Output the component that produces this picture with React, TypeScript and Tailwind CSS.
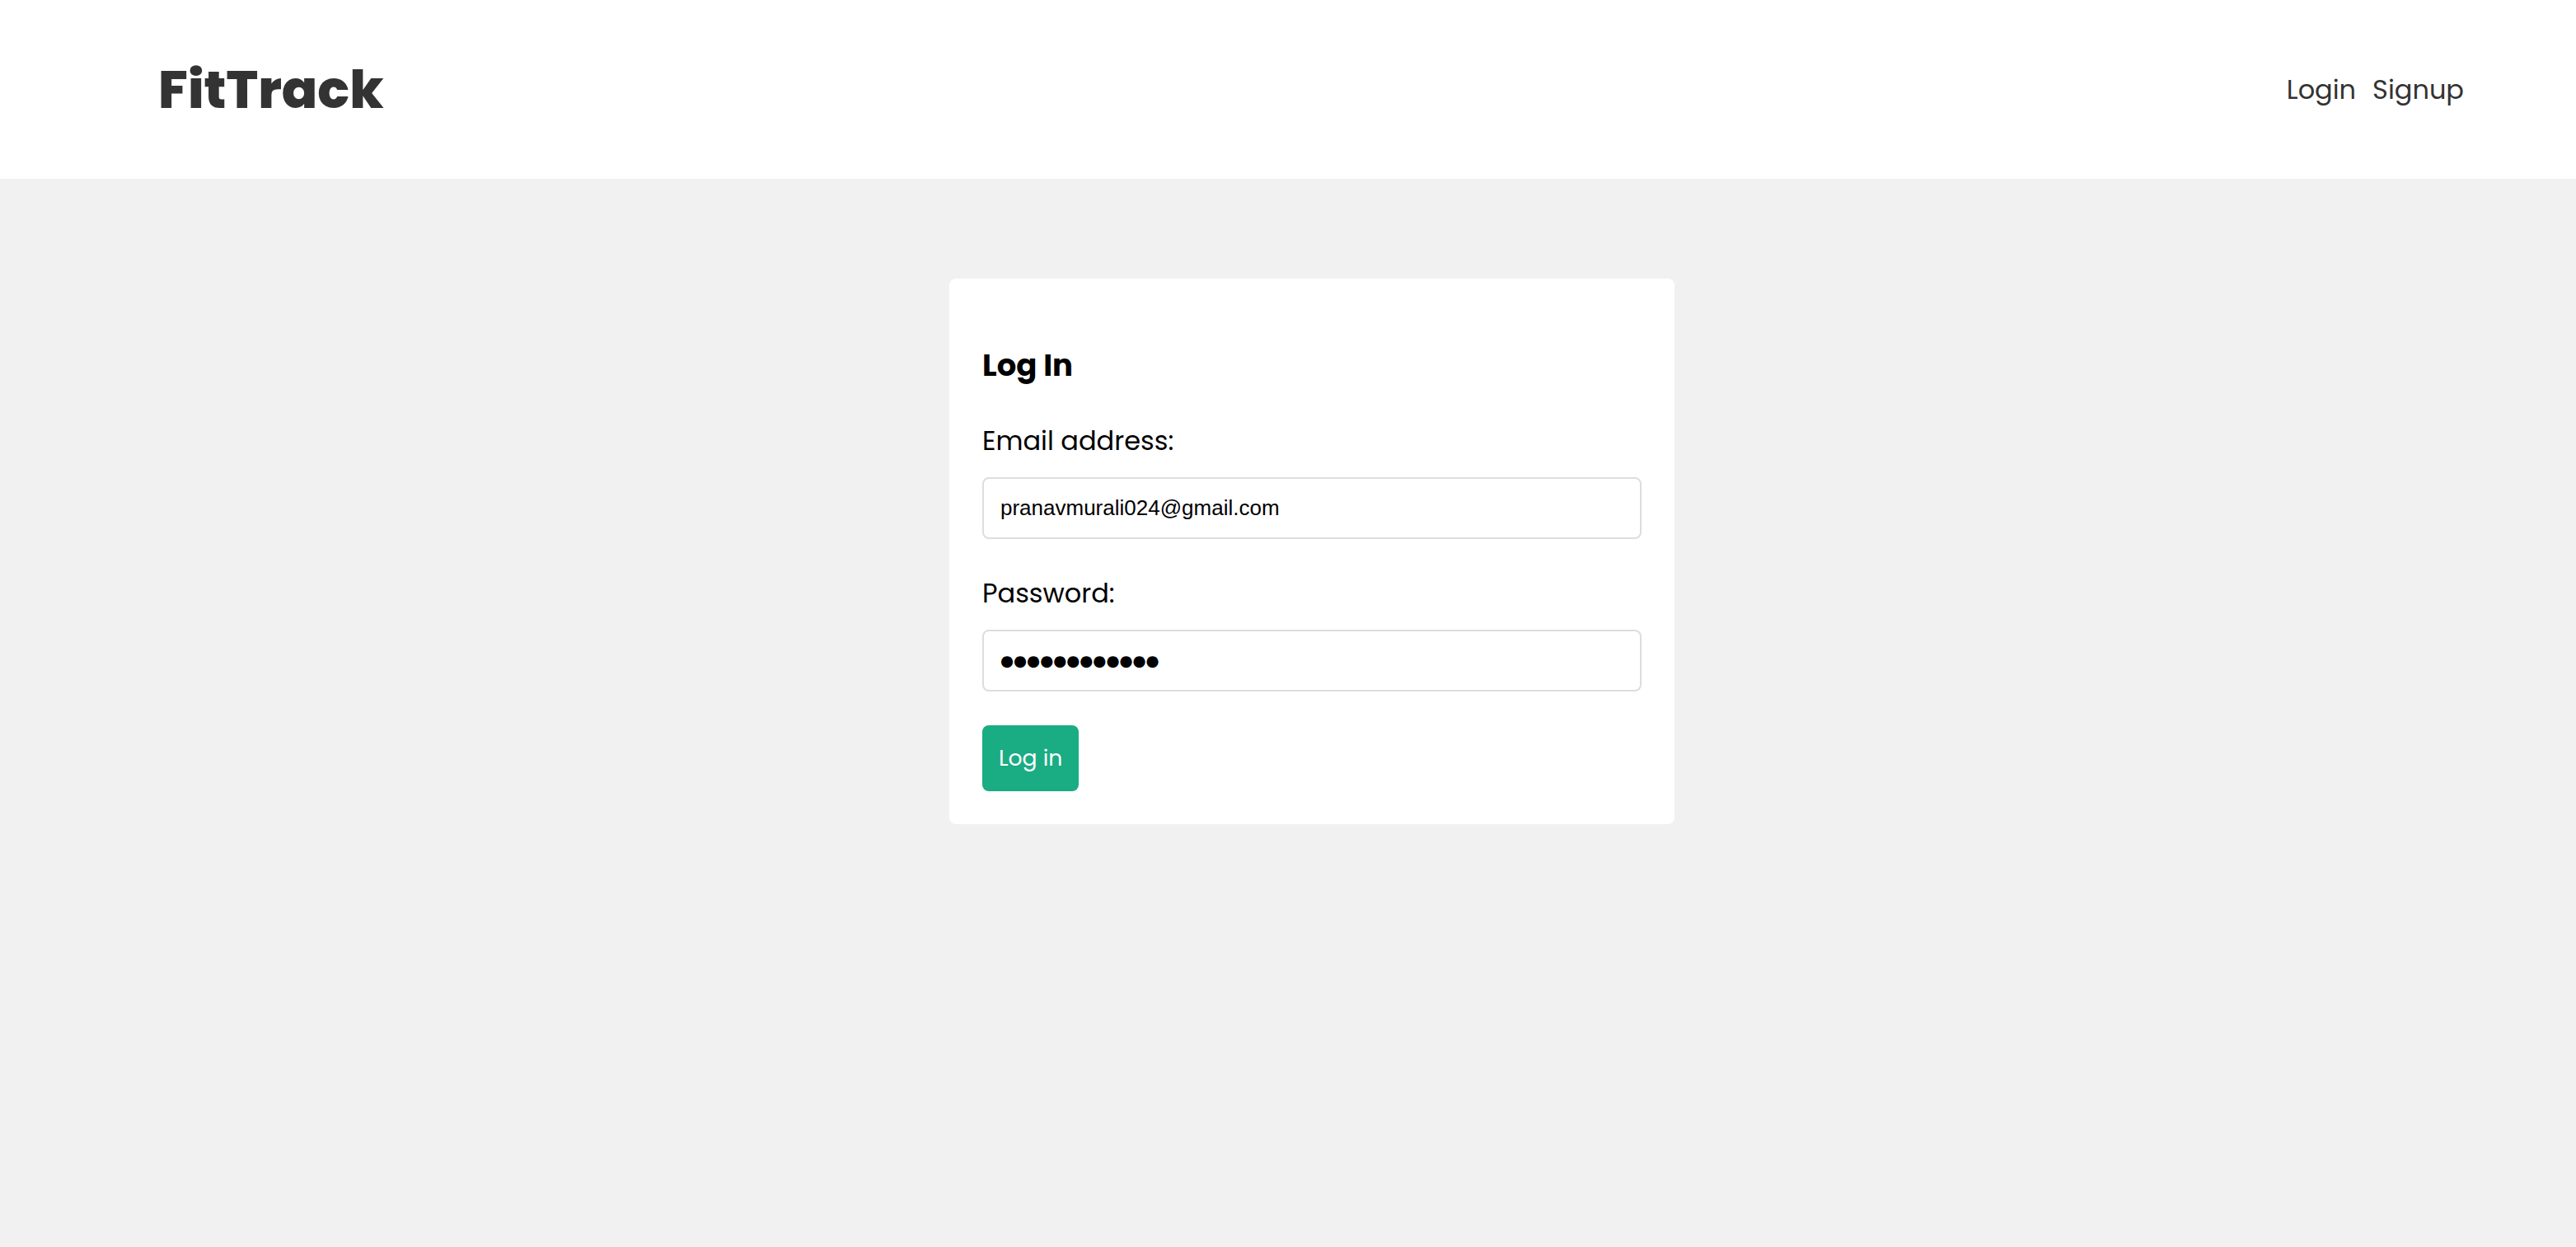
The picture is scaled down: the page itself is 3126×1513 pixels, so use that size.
import { useState } from 'react';

const Navbar = () => {
    return (
        <header className="bg-white">
            <div className="flex h-[217px] items-center justify-between pl-[192px] pr-[136px]">
                <a href="#/" className="text-[#333] no-underline">
                    <h1 className="m-0 text-[64px] leading-none font-extrabold">FitTrack</h1>
                </a>
                <nav className="flex items-center">
                    <div className="flex items-center gap-[20px] text-[32px] leading-[48px] text-[#333]">
                        <a href="#/login" className="no-underline">Login</a>
                        <a href="#/signup" className="no-underline">Signup</a>
                    </div>
                </nav>
            </div>
        </header>
    );
};

const Login = () => {
    const [email, setEmail] = useState('pranavmurali024@gmail.com');
    const [password] = useState('supersecret1');

    // masked the way the browser showed it in the screenshot
    const masked = '●'.repeat(password.length);

    return (
        <form
            className="w-[880px] rounded-[8px] bg-white p-[40px]"
            onSubmit={(e) => e.preventDefault()}
        >
            <h3 className="mt-[37px] mb-[40px] text-[37px] leading-[56px] font-bold text-black">Log In</h3>

            <label className="block text-[32px] leading-[48px] text-black">Email address:</label>
            <input
                type="email"
                value={email}
                onChange={(e) => setEmail(e.target.value)}
                className="mt-[20px] mb-[42px] block h-[75px] w-full rounded-[8px] border-2 border-[#ddd] bg-white px-[20px] font-['Liberation_Sans',Arial,sans-serif] text-[26px] text-black outline-none"
            />

            <label className="block text-[32px] leading-[48px] text-black">Password:</label>
            <input
                type="text"
                value={masked}
                readOnly
                className="mt-[20px] mb-[41px] block h-[75px] w-full rounded-[8px] border-2 border-[#ddd] bg-white px-[20px] font-['DejaVu_Sans',sans-serif] text-[18.4px] text-black outline-none"
            />

            <button className="h-[80px] cursor-pointer rounded-[8px] border-0 bg-[#1aac83] px-[20px] text-[26.67px] leading-[40px] text-white">
                Log in
            </button>
        </form>
    );
};

export default function App() {
    return (
        <div className="min-h-screen bg-[#f1f1f1] font-['Poppins','Inter',sans-serif]">
            <Navbar />
            {/* pages */}
            <div className="flex justify-center pt-[121px] pl-[58px]">
                <Login />
            </div>
        </div>
    );
}
